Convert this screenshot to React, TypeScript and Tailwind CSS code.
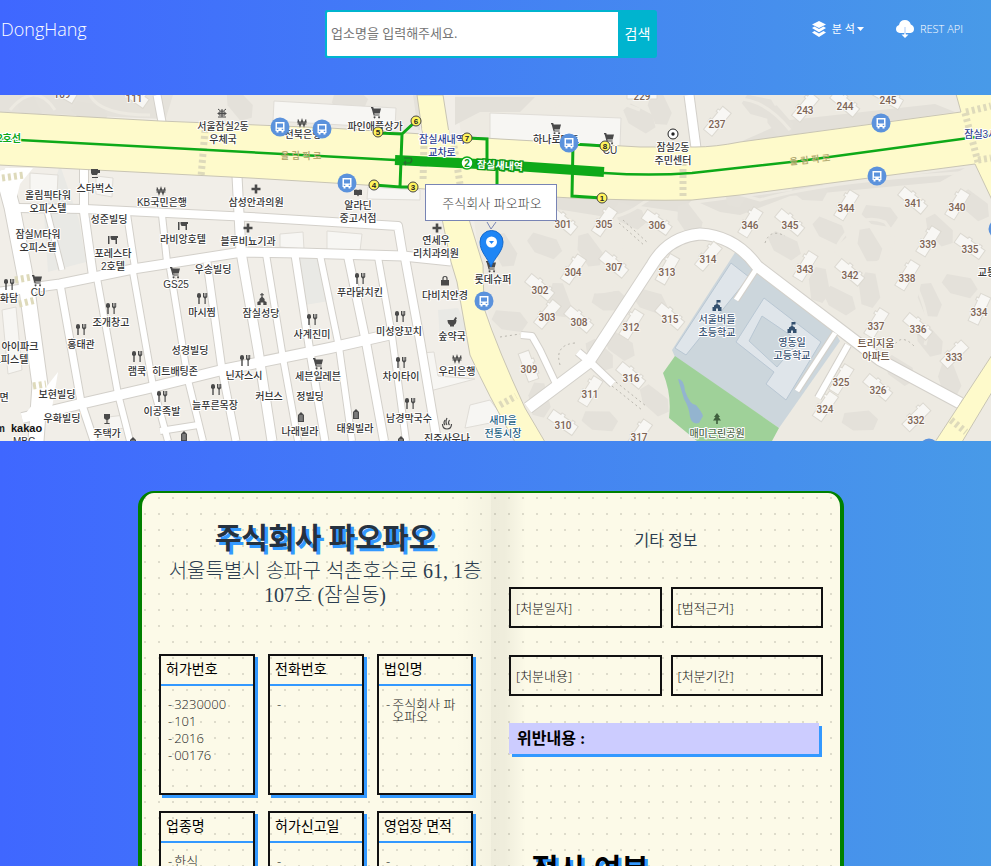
import type { ReactNode } from "react";

const SANS = "font-['Open_Sans','Noto_Sans_CJK_KR',sans-serif]";
const SERIF = "font-['Liberation_Serif','Noto_Sans_CJK_KR',serif]";
const MAP_FONT = "font-['Liberation_Sans','Noto_Sans_CJK_KR',sans-serif]";

type Point = [number, number];

/* ---------- map data ---------- */

const streets: { d: string; w: number }[] = [
  { d: "M18 208 L85 209 L167 213 L250 217 L398 226 L403 256", w: 8 },
  { d: "M0 292 L60 284 L133 269 L242 252 L300 253 L403 256 L451 261", w: 9 },
  { d: "M22 418 L80 404 L145 389 L222 370 L330 348 L392 334", w: 10 },
  { d: "M160 431 L198 425", w: 6 },
  { d: "M2 170 L12 207 L25 275 L40 385 L36 441", w: 15 },
  { d: "M46 207 L62 270", w: 5 },
  { d: "M84 165 L84 212 L93 276", w: 8 },
  { d: "M127 214 L135 268", w: 6 },
  { d: "M162 215 L167 262", w: 6 },
  { d: "M237 176 L241 252 L258 350 L272 441", w: 9 },
  { d: "M60 284 L81 402 L94 441", w: 7 },
  { d: "M97 278 L118 394 L130 441", w: 6 },
  { d: "M133 272 L153 386 L168 441", w: 6 },
  { d: "M170 268 L188 380 L203 441", w: 6 },
  { d: "M207 262 L222 370 L236 441", w: 7 },
  { d: "M266 254 L283 358 L298 441", w: 6 },
  { d: "M295 255 L310 352 L325 441", w: 7 },
  { d: "M320 255 L339 347 L352 441", w: 6 },
  { d: "M348 256 L366 342 L384 441", w: 8 },
  { d: "M378 257 L392 336 L406 441", w: 6 },
  { d: "M405 258 L420 340 L437 441", w: 8 },
  { d: "M157 95 L162 122", w: 7 },
  { d: "M689 95 L696 148", w: 9 },
  { d: "M528 408 L588 363 L652 265 Q668 237 700 234 Q735 236 757 266 L850 337 L880 360 L960 403", w: 11 },
  { d: "M578 352 L590 362 L613 384", w: 7 },
  { d: "M521 335 L532 336 L540 350 L557 386", w: 6 },
  { d: "M848 345 L818 398", w: 6 },
  { d: "M757 268 L736 300", w: 5 },
  { d: "M835 333 L797 391", w: 5 },
];

const blocks: string[] = [
  "30,173 58,175 57,196 30,194",
  "96,176 113,178 112,197 96,194",
  "280,234 303,232 304,249 280,247",
  "327,231 362,234 360,251 327,250",
  "368,187 420,190 420,200 367,199",
  "274,101 396,108 395,128 273,121",
  "490,113 621,118 620,146 490,139",
  "422,353 434,352 438,376 475,379 430,391",
  "470,405 490,400 505,420 465,428",
  "2,310 16,307 22,370 8,374",
  "108,417 125,415 125,428 110,430",
];

const towers: { x: number; y: number; n: string; r: number }[] = [
  { x: 563, y: 224, n: "301", r: 40 }, { x: 604, y: 224, n: "305", r: -55 },
  { x: 657, y: 225, n: "306", r: 35 }, { x: 573, y: 272, n: "304", r: -55 },
  { x: 614, y: 267, n: "307", r: 40 }, { x: 667, y: 272, n: "313", r: -60 },
  { x: 708, y: 259, n: "314", r: -50 }, { x: 540, y: 290, n: "302", r: 40 },
  { x: 547, y: 317, n: "303", r: -50 }, { x: 579, y: 322, n: "308", r: 40 },
  { x: 631, y: 327, n: "312", r: -58 }, { x: 670, y: 319, n: "315", r: 40 },
  { x: 529, y: 369, n: "309", r: 70 }, { x: 590, y: 394, n: "311", r: -58 },
  { x: 631, y: 378, n: "316", r: 40 }, { x: 563, y: 425, n: "310", r: 35 },
  { x: 639, y: 437, n: "317", r: -55 }, { x: 717, y: 124, n: "237", r: -50 },
  { x: 805, y: 110, n: "243", r: -50 }, { x: 845, y: 106, n: "244", r: 40 },
  { x: 888, y: 100, n: "245", r: 30 }, { x: 642, y: 96, n: "229", r: 0 },
  { x: 846, y: 208, n: "344", r: -58 }, { x: 913, y: 203, n: "341", r: 40 },
  { x: 957, y: 207, n: "340", r: -58 }, { x: 750, y: 225, n: "346", r: -58 },
  { x: 790, y: 225, n: "345", r: 40 }, { x: 928, y: 244, n: "339", r: -58 },
  { x: 970, y: 249, n: "335", r: 35 }, { x: 805, y: 269, n: "343", r: -58 },
  { x: 850, y: 275, n: "342", r: 40 }, { x: 907, y: 278, n: "338", r: -58 },
  { x: 979, y: 312, n: "334", r: -65 }, { x: 876, y: 326, n: "337", r: -58 },
  { x: 918, y: 329, n: "336", r: 40 }, { x: 954, y: 357, n: "333", r: -45 },
  { x: 841, y: 382, n: "325", r: -58 }, { x: 878, y: 390, n: "326", r: 40 },
  { x: 825, y: 409, n: "324", r: -55 }, { x: 916, y: 420, n: "332", r: -45 },
  { x: 134, y: 98, n: "111", r: 35 }, { x: 62, y: 94, n: "109", r: 30 },
];

const lawns: Point[] = [
  [548, 150], [640, 118], [660, 108], [760, 106], [780, 122], [610, 300], [620, 345], [560, 300],
  [545, 245], [590, 250], [600, 420], [655, 400], [540, 400], [830, 230], [870, 245], [880, 215],
  [940, 230], [820, 285], [840, 300], [930, 300], [960, 285], [930, 340], [860, 420], [900, 370],
  [950, 380], [650, 300], [690, 220], [810, 190], [975, 205], [735, 190], [630, 215], [505, 250],
  [510, 320], [600, 355], [870, 290], [785, 245], [30, 108], [90, 112], [240, 104], [350, 100],
];

const places: { x: number; y: number; lines: string[]; tone?: string; icon?: string; ix?: number; iy?: number }[] = [
  { x: 223, y: 130, lines: ["서울잠실2동", "우체국"], icon: "post", ix: 222, iy: 113 },
  { x: 48, y: 199, lines: ["올림픽타워", "오피스텔"] },
  { x: 95, y: 192, lines: ["스타벅스"], icon: "cafe", ix: 95, iy: 173 },
  { x: 162, y: 206, lines: ["KB국민은행"], icon: "won", ix: 161, iy: 191 },
  { x: 256, y: 206, lines: ["삼성안과의원"], icon: "cross", ix: 256, iy: 189 },
  { x: 109, y: 223, lines: ["성준빌딩"] },
  { x: 38, y: 238, lines: ["잠실M타워", "오피스텔"] },
  { x: 183, y: 243, lines: ["라비앙호텔"], icon: "bed", ix: 183, iy: 226 },
  { x: 248, y: 245, lines: ["블루비뇨기과"], icon: "cross", ix: 248, iy: 228 },
  { x: 113, y: 257, lines: ["포레스타", "2호텔"], icon: "bed", ix: 113, iy: 240 },
  { x: 213, y: 273, lines: ["우송빌딩"] },
  { x: 303, y: 138, lines: ["전북은행"], icon: "won", ix: 302, iy: 123 },
  { x: 375, y: 130, lines: ["파인애플상가"], icon: "cart", ix: 376, iy: 112 },
  { x: 358, y: 209, lines: ["알라딘", "중고서점"], icon: "book", ix: 358, iy: 193 },
  { x: 436, y: 244, lines: ["연세우", "리치과의원"], icon: "cross", ix: 437, iy: 228 },
  { x: 442, y: 143, lines: ["잠실새내역", "교차로"], tone: "navy" },
  { x: 556, y: 143, lines: ["하나로마트"], icon: "cart", ix: 556, iy: 128 },
  { x: 610, y: 154, lines: ["CU"], icon: "cart", ix: 609, iy: 138 },
  { x: 673, y: 151, lines: ["잠실2동", "주민센터"], icon: "dot", ix: 673, iy: 134 },
  { x: 990, y: 138, lines: ["잠실3사거리"], tone: "navy" },
  { x: 38, y: 296, lines: ["CU"], icon: "cart", ix: 37, iy: 280 },
  { x: 9, y: 302, lines: ["화담"], icon: "food", ix: 9, iy: 285 },
  { x: 176, y: 288, lines: ["GS25"], icon: "cart", ix: 175, iy: 272 },
  { x: 202, y: 316, lines: ["마시찜"], icon: "food", ix: 202, iy: 299 },
  { x: 111, y: 326, lines: ["조개창고"], icon: "food", ix: 111, iy: 309 },
  { x: 81, y: 348, lines: ["홍태관"], icon: "food", ix: 81, iy: 330 },
  { x: 20, y: 350, lines: ["아이파크"] },
  { x: 10, y: 363, lines: ["오피스텔"] },
  { x: 190, y: 354, lines: ["성경빌딩"] },
  { x: 137, y: 375, lines: ["램쿡"], icon: "food", ix: 137, iy: 357 },
  { x: 175, y: 375, lines: ["히트배팅존"] },
  { x: 57, y: 398, lines: ["보현빌딩"] },
  { x: 4, y: 401, lines: ["면"] },
  { x: 162, y: 415, lines: ["이공족발"], icon: "food", ix: 162, iy: 397 },
  { x: 215, y: 409, lines: ["늘푸른목장"], icon: "food", ix: 216, iy: 390 },
  { x: 62, y: 422, lines: ["우화빌딩"] },
  { x: 107, y: 437, lines: ["주택가"], icon: "wine", ix: 107, iy: 419 },
  { x: 261, y: 317, lines: ["잠실성당"], icon: "church", ix: 262, iy: 299 },
  { x: 360, y: 296, lines: ["푸라닭치킨"], icon: "food", ix: 360, iy: 279 },
  { x: 445, y: 299, lines: ["다비치안경"], icon: "bag", ix: 445, iy: 281 },
  { x: 312, y: 338, lines: ["사계진미"], icon: "food", ix: 312, iy: 320 },
  { x: 399, y: 335, lines: ["미성양꼬치"], icon: "food", ix: 400, iy: 317 },
  { x: 452, y: 340, lines: ["숲약국"], icon: "mortar", ix: 452, iy: 322 },
  { x: 244, y: 379, lines: ["닌자스시"], icon: "food", ix: 245, iy: 361 },
  { x: 318, y: 380, lines: ["세븐일레븐"], icon: "cart", ix: 318, iy: 363 },
  { x: 401, y: 380, lines: ["차이타이"], icon: "food", ix: 401, iy: 363 },
  { x: 457, y: 375, lines: ["우리은행"], icon: "won", ix: 457, iy: 359 },
  { x: 269, y: 400, lines: ["커브스"] },
  { x: 310, y: 400, lines: ["정빌딩"] },
  { x: 409, y: 422, lines: ["남경막국수"], icon: "food", ix: 410, iy: 404 },
  { x: 300, y: 435, lines: ["나래빌라"], icon: "villa", ix: 301, iy: 417 },
  { x: 355, y: 432, lines: ["태원빌라"], icon: "villa", ix: 356, iy: 414 },
  { x: 447, y: 442, lines: ["진주사우나"], icon: "spa", ix: 447, iy: 424 },
  { x: 503, y: 424, lines: ["새마을", "전통시장"], tone: "teal" },
  { x: 493, y: 283, lines: ["롯데슈퍼"], icon: "cart", ix: 491, iy: 266 },
  { x: 717, y: 323, lines: ["서울버들", "초등학교"], tone: "slate", icon: "school", ix: 717, iy: 306 },
  { x: 792, y: 346, lines: ["영동일", "고등학교"], tone: "slate", icon: "school", ix: 792, iy: 328 },
  { x: 876, y: 347, lines: ["트리지움", "아파트"], tone: "brown" },
  { x: 717, y: 437, lines: ["매미근린공원"], tone: "green", icon: "tree", ix: 717, iy: 419 },
  { x: 987, y: 276, lines: ["교통"] },
  { x: 24, y: 445, lines: ["MBC"] },
];

const loneIcons: { kind: string; x: number; y: number }[] = [
  { kind: "villa", x: 184, y: 436 },
  { kind: "villa", x: 133, y: 442 },
  { kind: "villa", x: 401, y: 441 },
];

const toneColor: Record<string, string> = {
  navy: "#2f3f8f",
  teal: "#1d6283",
  slate: "#3a5474",
  brown: "#6b5343",
  green: "#4f6a4c",
};

const buses: Point[] = [[280, 127], [322, 129], [347, 183], [569, 143], [881, 123], [877, 176], [484, 301], [998, 229], [929, 448]];

const exits: { x: number; y: number; n: number }[] = [
  { x: 416, y: 121, n: 6 }, { x: 378, y: 132, n: 5 }, { x: 467, y: 138, n: 7 }, { x: 605, y: 146, n: 8 },
  { x: 374, y: 185, n: 4 }, { x: 413, y: 187, n: 3 }, { x: 602, y: 198, n: 1 },
];

function Glyph({ kind, x, y }: { kind: string; x: number; y: number }) {
  const shapes: Record<string, ReactNode> = {
    food: <path d="M-5 -4 q0 -2 2 -2 q2 0 2 2 v2 l-1.300 1 v6 h-1.400 v-6 l-1.300 -1 z M1 -6 v4 l1.500 1.500 v5.500 h1.200 v-5.500 l1.500 -1.500 v-4 h-1 v3.500 h-.6 v-3.500 h-1 v3.500 h-.6 v-3.500 z" />,
    cart: <path d="M-5 -5 h2.200 l.5 1.500 h7.300 l-1.300 5 h-5.400 l.3 1 h5 v1 h-6 l-2 -7.300 h-.6 z M-1.500 4.200 a1 1 0 1 0 .1 0 z M3 4.200 a1 1 0 1 0 .1 0 z" />,
    cross: <path d="M-1.300 -4.500 h2.600 v3.200 h3.200 v2.600 h-3.200 v3.200 h-2.600 v-3.200 h-3.200 v-2.600 h3.200 z" />,
    won: <path d="M-4 -3.500 L-2 3 L0 -3 L2 3 L4 -3.500 M-5 -1 h10 M-4.500 1 h9" fill="none" stroke="#4a4a4a" strokeWidth="1.200" />,
    cafe: <path d="M-4 -4 h7 v1 h2 v3 h-2 l-1 2 h-5 l-1 -2 z M-3 4 h6 v1 h-6 z" />,
    bed: <path d="M-5 -4 h1.500 v8 h-1.500 z M-2.500 -4 h7.500 v2 h-1 v6 h-1.500 v-4 h-4 l-1 -2 z" />,
    book: <path d="M-4 -3 q2 -1 4 0 q2 -1 4 0 v5 h-3 l-1 1.500 l-1 -1.500 h-3 z" />,
    bag: <g><path d="M-4 -1 h8 v5.500 h-8 z" /><path d="M-2 -1 v-1.500 q0 -2 2 -2 q2 0 2 2 v1.500" fill="none" stroke="#4a4a4a" strokeWidth="1.200" /></g>,
    mortar: <path d="M-4.500 -2 h6 l2 -3 l1.500 1 l-1.200 2 h.7 q0 4 -2.500 5 v1.500 h-4 v-1.500 q-2.500 -1 -2.500 -5 z" />,
    villa: <g><path d="M-3 5 v-7 l3 -3 l3 3 v7 z" /><path d="M-1.800 -1 h3.600 M-1.800 1 h3.600 M-1.800 3 h3.600" stroke="#eee" strokeWidth=".6" /></g>,
    church: <path d="M-.6 -6 h1.200 v1.300 h1.300 v1 h-1.300 v1.700 l2 2 v2 l2 1 v3 h-3.300 v-2.500 h-2.600 v2.500 h-3.300 v-3 l2 -1 v-2 l2 -2 v-1.700 h-1.300 v-1 h1.300 z" />,
    wine: <path d="M-3 -5 h6 v4 q0 1 -2.400 2 v3 h2 v1 h-5.200 v-1 h2 v-3 q-2.400 -1 -2.400 -2 z" />,
    spa: <path d="M-4.500 0 q0 5 4.500 5 q4.500 0 4.500 -5 M-2 1 q-2 -2 0 -5 M0 1 q-2 -3 0 -7 M2.500 1 q-2 -2 0 -5" fill="none" stroke="#4a4a4a" strokeWidth="1.200" />,
    post: <path d="M-4 -4 l2.500 2 h3 l2.500 -2 M-4 4 h8 M-3 -1 h6 v3 h-6 z M-4.500 .5 h9 M0 -4 v8" fill="none" stroke="#4a4a4a" strokeWidth="1" />,
    dot: <g><circle r="5" fill="#fff" stroke="#222" /><circle r="1.700" fill="#222" /></g>,
    school: <path fill="#33506f" d="M-.5 -6 h4 v2.500 h-3 v1.500 l2.500 1.500 v1.500 h1.500 v4 h-3.500 v-2.500 h-2 v2.500 h-3.500 v-4 h1.500 v-1.500 l2.500 -1.500 z" />,
    tree: <path fill="#3f5f3d" d="M0 -6 l3 4 h-1.500 l2.500 3.500 h-3.200 v3.500 h-1.600 v-3.500 h-3.200 l2.500 -3.500 h-1.500 z" />,
  };
  return (
    <g transform={`translate(${x} ${y})`} fill="#4a4a4a">
      {shapes[kind]}
    </g>
  );
}

function KakaoMap() {
  return (
    <svg
      className={`block h-[346px] w-full ${MAP_FONT}`}
      viewBox="0 95 991 346"
      preserveAspectRatio="xMidYMid slice"
      role="img"
      aria-label="지도"
    >
      <rect x="0" y="95" width="991" height="346" fill="#f1eee8" />
      <path d="M455 95 H991 V441 H545 Q500 370 485 300 L470 190 Z" fill="#edeae2" />
      <path d="M0 95 H420 V130 L0 112 Z" fill="#e5e2db" />
      <path d="M173 95 H413 L418 130 L165 121 Z" fill="#edeae3" />
      <path d="M60 165 L79 220 L86 262 L48 272 L44 215 Z M298 256 L318 256 L335 300 L305 305 Z M438 310 L458 308 L470 335 L440 340 Z" fill="#e9e9e5" />
      <path d="M485 193 L692 200 L680 212 L640 206 L600 216 L550 208 L500 220 Z M700 203 L965 168 L940 182 L790 196 L740 215 L720 212 Z M455 97 H535 L520 112 H480 L455 125 Z M740 142 L955 112 L935 104 L790 120 Z" fill="#e3e0d9" />
      {lawns.map(([x, y], i) => (
        <path
          key={i}
          transform={`translate(${x} ${y}) rotate(${(i * 37) % 90})`}
          d="M-16 -6 L8 -10 L18 -2 L14 9 L-6 11 L-18 4 Z"
          fill="#e4e1da"
        />
      ))}
      <g fill="none" stroke="#edeae2" strokeWidth="3">
        <path d="M500 205 Q600 235 640 205 T760 200 Q830 180 975 172 M552 260 q20 40 60 30 q25 -20 10 -45 M835 250 q20 -40 50 -28 q20 25 -10 42 q-20 10 -40 -14 M905 265 q30 50 20 80" />
        <path d="M520 130 q50 -50 120 -20 M700 110 q50 -30 90 20 M10 110 q25 -30 45 0 M90 95 q10 20 60 20" />
      </g>
      <g fill="none" stroke="#b9b6ae" strokeWidth="1" strokeDasharray="2 3">
        <path d="M619 223 L645 246 M623 220 L648 243 M612 386 L642 410 M616 382 L646 406 M560 365 Q554 345 575 343 M765 243 Q770 228 785 236 M893 348 Q900 332 914 346 M500 337 L520 334" />
      </g>

      {/* school grounds and park */}
      <path d="M736 251 L757 268 L835 332 L840 341 L779 428 L675 357 L672 350 Z" fill="#ccd6dc" />
      <path d="M731 263 L749 277 L686 355 L675 348 Z M764 298 L821 342 L786 400 L766 384 L774 372 L736 342 Z" fill="#dfe5ea" stroke="#b9c7d3" />
      <path d="M762 316 L799 341 L777 367 L749 341 Z" fill="#ccd6dc" stroke="#b9c7d3" />
      <path d="M675 356 L663 373 Q672 395 669 418 L697 441 H772 L779 428 Z" fill="#9fd199" />
      <path d="M678 379 q6 0 7 12 q5 14 11 14 q6 7 7 11 l-4 7 q-7 2 -9 -6 q-1 -10 -6 -18 z" fill="#93b4cf" />

      {blocks.map((p, i) => (
        <polygon key={i} points={p} fill="#f7f6f3" stroke="#e0ddd7" />
      ))}

      <g fill="none" strokeLinejoin="round">
        {streets.map((s, i) => (
          <path key={i} d={s.d} stroke="#d3d0ca" strokeWidth={s.w + 2} />
        ))}
        {streets.map((s, i) => (
          <path key={i} d={s.d} stroke="#fff" strokeWidth={s.w} />
        ))}
      </g>
      <path d="M22 418 L58 372 L52 408 Z M16 200 L5 168 L33 168 L20 184 Z" fill="#fff" />

      {/* arterial roads */}
      <g fill="#fefacb" stroke="#c9c5b4">
        <path d="M417 95 H443 L449 133 L460 190 L483 265 L484 308 Q498 350 525 408 L545 442 H515 Q488 395 470 355 L457 282 L451 262 L436 190 L422 130 Z" />
        <path d="M992 355 L935 442 H962 L992 392 Z" />
        <path d="M956 94 L961 112 L740 142 Q715 147 695 147 L640 147 L500 139 L330 128 L160 121 L-1 112 V165 L250 178 L350 184 L500 194 L572 198 Q640 201 692 200 L740 195 L975 164 L992 200 V94 Z" />
      </g>
      <path d="M422 128 L449 130 L462 195 L437 193 Z" fill="#fefacb" />
      <g fill="none" stroke="#dedabb" strokeWidth="7" strokeDasharray="3 3">
        <path d="M205 130 L201 177" /><path d="M683 157 L683 198" /><path d="M424 140 L423 182" /><path d="M453 140 L460 184" />
        <path d="M965 113 L978 162" /><path d="M966 112 L991 106" /><path d="M978 160 L991 158" /><path d="M500 405 L516 396" /><path d="M951 420 L966 432" />
        <path d="M2 178 L24 175" /><path d="M15 280 L32 277" /><path d="M19 304 L36 300" /><path d="M33 386 L46 384" />
      </g>

      {towers.map((t) => (
        <path
          key={t.n}
          transform={`translate(${t.x} ${t.y - 3}) rotate(${t.r})`}
          d="M-15 -5 h9 v-2 h4 v2 h9 v-2 h3 v2 h5 v11 h-30 z"
          fill="#f8f7f4"
          stroke="#dcd9d1"
        />
      ))}
      <g fill="#7d6455" fontSize="10" fontWeight="500" textAnchor="middle" className="font-[Roboto,sans-serif]">
        {towers.map((t) => (
          <text key={t.n} x={t.x} y={t.y + 4} stroke="#f8f7f4" strokeWidth="2" paintOrder="stroke">{t.n}</text>
        ))}
      </g>

      {/* metro line 2 */}
      <g fill="none" stroke="#0ea918">
        <path d="M0 139 L395 160 L500 166 L604 173 Q650 176 692 173 L800 161 L991 135" strokeWidth="2.500" />
        <path d="M395 160 L500 165 L604 172" strokeWidth="10" />
        <path d="M416 121 L402 134 L378 133 M402 134 L400 187 L374 185 M400 187 H413 M467 138 L487 139 V165 M497 165 V186 M605 146 L573 144 L572 196 L602 198" strokeWidth="3" />
        <path d="M404 158 h7 q2 3 -1 5 h-6 m2 -2 l-2 2 l2 2" stroke="#2a6b2e" strokeWidth="1.200" />
      </g>
      <g fontSize="9" fontWeight="700" fill="#b5ac72" textAnchor="middle">
        <text x="301" y="159">올 림 픽 로</text>
        <text x="810" y="163" transform="rotate(-6 810 160)">올 림 픽 로</text>
      </g>
      <text x="9" y="142" textAnchor="middle" fontSize="10" fontWeight="700" fill="#0ea918" stroke="#fff" strokeWidth="2" paintOrder="stroke">2호선</text>

      {loneIcons.map((i) => (
        <Glyph key={i.x} kind={i.kind} x={i.x} y={i.y} />
      ))}
      <g textAnchor="middle" fontSize="10" fontWeight="500">
        {places.map((p) => (
          <g key={p.x + "-" + p.y}>
            {p.icon && <Glyph kind={p.icon} x={p.ix ?? p.x} y={p.iy ?? p.y - 17} />}
            {p.lines.map((line, i) => (
              <text
                key={line}
                x={p.x}
                y={p.y + i * 13}
                fill={p.tone ? toneColor[p.tone] : "#333"}
                stroke="#fff"
                strokeWidth="2"
                strokeLinejoin="round"
                paintOrder="stroke"
              >
                {line}
              </text>
            ))}
          </g>
        ))}
      </g>

      <text x="500" y="169" textAnchor="middle" fontSize="10" fontWeight="700" fill="#fff" stroke="#0b9a14" strokeWidth="3" paintOrder="stroke" transform="rotate(3 500 165)">잠실새내역</text>
      <circle cx="467" cy="163" r="6" fill="#fff" stroke="#0ea918" strokeWidth="1.500" />
      <text x="467" y="167" textAnchor="middle" fontSize="10" fontWeight="700" fill="#0b9a14">2</text>

      {exits.map((e) => (
        <g key={e.n}>
          <circle cx={e.x} cy={e.y} r="5" fill="#fff45c" stroke="#444" />
          <text x={e.x} y={e.y + 3} textAnchor="middle" fontSize="8" fontWeight="700" fill="#222">{e.n}</text>
        </g>
      ))}

      {buses.map(([x, y]) => (
        <g key={x} transform={`translate(${x} ${y})`}>
          <circle r="9.500" fill="#5b92dc" />
          <path d="M-4.500 -5 h9 v9 h-1 v1.500 h-2 v-1.500 h-3 v1.500 h-2 v-1.500 h-1 z" fill="#fff" />
          <path d="M-3 -3.500 h6 v4 h-6 z M-3.200 1.800 h1.500 v1.200 h-1.500 z M1.700 1.800 h1.500 v1.200 h-1.500 z" fill="#5b92dc" />
        </g>
      ))}

      <text x="-4" y="432" fontSize="10" fontWeight="700" fill="#222">m</text>
      <text x="11" y="432" fontSize="11" fontWeight="700" fill="#111">kakao</text>

      {/* selected place */}
      <path d="M491 267 C488 258 480 252 480 242 a11.500 11.500 0 0 1 23 0 C503 252 494 258 491 267 Z" fill="#1f86f5" stroke="#1569cb" />
      <circle cx="491.500" cy="242" r="5.500" fill="#fff" />
      <path d="M489 241 h5 l-2.500 3 z" fill="#1f86f5" />
      <path d="M487 222 L491 229 L496 222" fill="none" stroke="#7884b4" />
      <rect x="425.500" y="184.500" width="131" height="36" fill="#fff" stroke="#7884b4" />
      <text x="492" y="208" textAnchor="middle" fontSize="13" fontWeight="300" fill="#444">주식회사 파오파오</text>
    </svg>
  );
}

/* ---------- header ---------- */

function Header() {
  return (
    <header className="grid h-[95px] grid-cols-[1fr_332px_1fr] items-start pr-[9px] pt-[10px] text-white">
      <div className="flex h-[38px] items-center pl-px">
        <a href="#" className="text-lg font-light leading-6">DongHang</a>
      </div>
      <form className="flex h-12 rounded-[3px] bg-[#00b4cf]" onSubmit={(e) => e.preventDefault()}>
        <input
          type="text"
          aria-label="업소명"
          placeholder="업소명을 입력해주세요."
          className="min-w-0 flex-1 rounded-l-[3px] border-2 border-r-0 border-[#00b4cf] bg-white px-1 text-[13px] text-gray-700 outline-none placeholder:text-[#757575]"
        />
        <button type="submit" className="w-[39px] rounded-r-[3px] text-sm">검색</button>
      </form>
      <nav className="flex h-[38px] items-center justify-end gap-8 pr-[19px] text-[11px]">
        <button type="button" className="flex items-center gap-1.5">
          <svg width="14" height="16" viewBox="0 0 14 16" fill="#fff" aria-hidden="true">
            <path d="M7 0 L14 3.500 L7 7 L0 3.500 Z M0 7 L2.500 5.600 L7 8 L11.500 5.600 L14 7 L7 11.200 Z M0 11.500 L2.500 10 L7 12.500 L11.500 10 L14 11.500 L7 16 Z" />
          </svg>
          <span className="flex items-center gap-0.5">
            분 석
            <svg width="7" height="4" viewBox="0 0 7 4" fill="#fff" aria-hidden="true"><path d="M0 0 H7 L3.500 4 Z" /></svg>
          </span>
        </button>
        <a href="#" className="flex items-center gap-1.5">
          <svg width="18" height="18" viewBox="0 0 18 18" fill="#fff" aria-hidden="true">
            <path d="M3.800 13 Q0 12.500 0 9 Q0 6 3 5 Q4 0 9 0 Q13.500 0 14.800 4.500 Q18 5.500 18 9 Q18 12.500 14.500 13 Z" />
            <path d="M8.200 12 H9.800 V14.500 H12.500 L9 18 L5.500 14.500 H8.200 Z" />
            <path d="M9 7 V14" stroke="#a9c9f6" strokeWidth="1" />
          </svg>
          <span className="font-light">REST API</span>
        </a>
      </nav>
    </header>
  );
}

/* ---------- open book ---------- */

const cards: { title: string; items: string[] }[] = [
  { title: "허가번호", items: ["3230000", "101", "2016", "00176"] },
  { title: "전화번호", items: [""] },
  { title: "법인명", items: ["주식회사 파오파오"] },
  { title: "업종명", items: ["한식"] },
  { title: "허가신고일", items: [""] },
  { title: "영업장 면적", items: [""] },
];

const penalties = ["[처분일자]", "[법적근거]", "[처분내용]", "[처분기간]"];

function InfoCard({ title, items }: { title: string; items: string[] }) {
  return (
    <section className="h-[141px] border-2 border-[#111] shadow-[3px_3px_0_#3399ff]">
      <h3 className={`border-b-2 border-[#3399ff] px-[5px] text-sm leading-7 text-black ${SERIF}`}>{title}</h3>
      <ul className="flex flex-col gap-[5px] px-[7px] pt-3 text-[13px] font-light leading-3 text-[#222]">
        {items.map((item) => (
          <li key={item} className="flex gap-0.5">
            <span>-</span>
            <span className="break-all">{item}</span>
          </li>
        ))}
      </ul>
    </section>
  );
}

function Book() {
  return (
    <main className="mx-auto grid h-[720px] w-full max-w-[706px] grid-cols-2 overflow-hidden rounded-[16px] border-x-4 border-y-2 border-[green] bg-[#fcfae8] bg-[radial-gradient(circle_at_3px_5px,#dedccb_0.8px,transparent_1px)] bg-[length:14px_16px]">
      <article className="bg-[linear-gradient(to_left,rgba(0,0,0,0.03),transparent_10%)] pl-[17px] pr-[18px] pt-[26px]">
        <header className="-mr-[18px] text-center text-[#2c3e50]">
          <h1 className={`text-[29px] font-bold leading-10 text-[#26323f] [text-shadow:3px_3px_0_#3399ff] ${SERIF}`}>주식회사 파오파오</h1>
          <p className={`text-xl font-light leading-6 ${SERIF}`}>
            서울특별시 송파구 석촌호수로 61, 1층<br />107호 (잠실동)
          </p>
        </header>
        <div className="mt-[47px] grid grid-cols-3 gap-x-[13px] gap-y-4">
          {cards.map((card) => (
            <InfoCard key={card.title} title={card.title} items={card.items} />
          ))}
        </div>
      </article>
      <article className="bg-[linear-gradient(to_right,rgba(0,0,0,0.06),rgba(0,0,0,0.05)_4%,transparent_10%)] pl-[18px] pr-[17px] pt-9">
        <h2 className={`text-center text-base leading-6 text-[#2c3e50] ${SERIF}`}>기타 정보</h2>
        <div className="mt-[34px] grid grid-cols-2 gap-x-[9px] gap-y-[27px]">
          {penalties.map((label) => (
            <div key={label} className="h-[41px] border-2 border-[#111] px-[5px] text-[13px] font-light leading-[38px] text-[#111]">{label}</div>
          ))}
        </div>
        <h3 className={`mr-1 mt-[27px] bg-[#ccccff] pl-2 text-base font-bold leading-[31px] text-black shadow-[3px_3px_0_#3399ff] ${SERIF}`}>위반내용 :</h3>
        <h2 className={`mt-[96px] pl-[22px] text-[30px] font-bold leading-10 text-black [text-shadow:3px_3px_0_#3399ff] ${SERIF}`}>점사 여부</h2>
      </article>
    </main>
  );
}

export default function App() {
  return (
    <div className={`h-screen overflow-hidden bg-[linear-gradient(to_right,#3f67ff,#489ae8)] ${SANS}`}>
      <Header />
      <KakaoMap />
      <div className="pr-[9px] pt-[50px]">
        <Book />
      </div>
    </div>
  );
}
